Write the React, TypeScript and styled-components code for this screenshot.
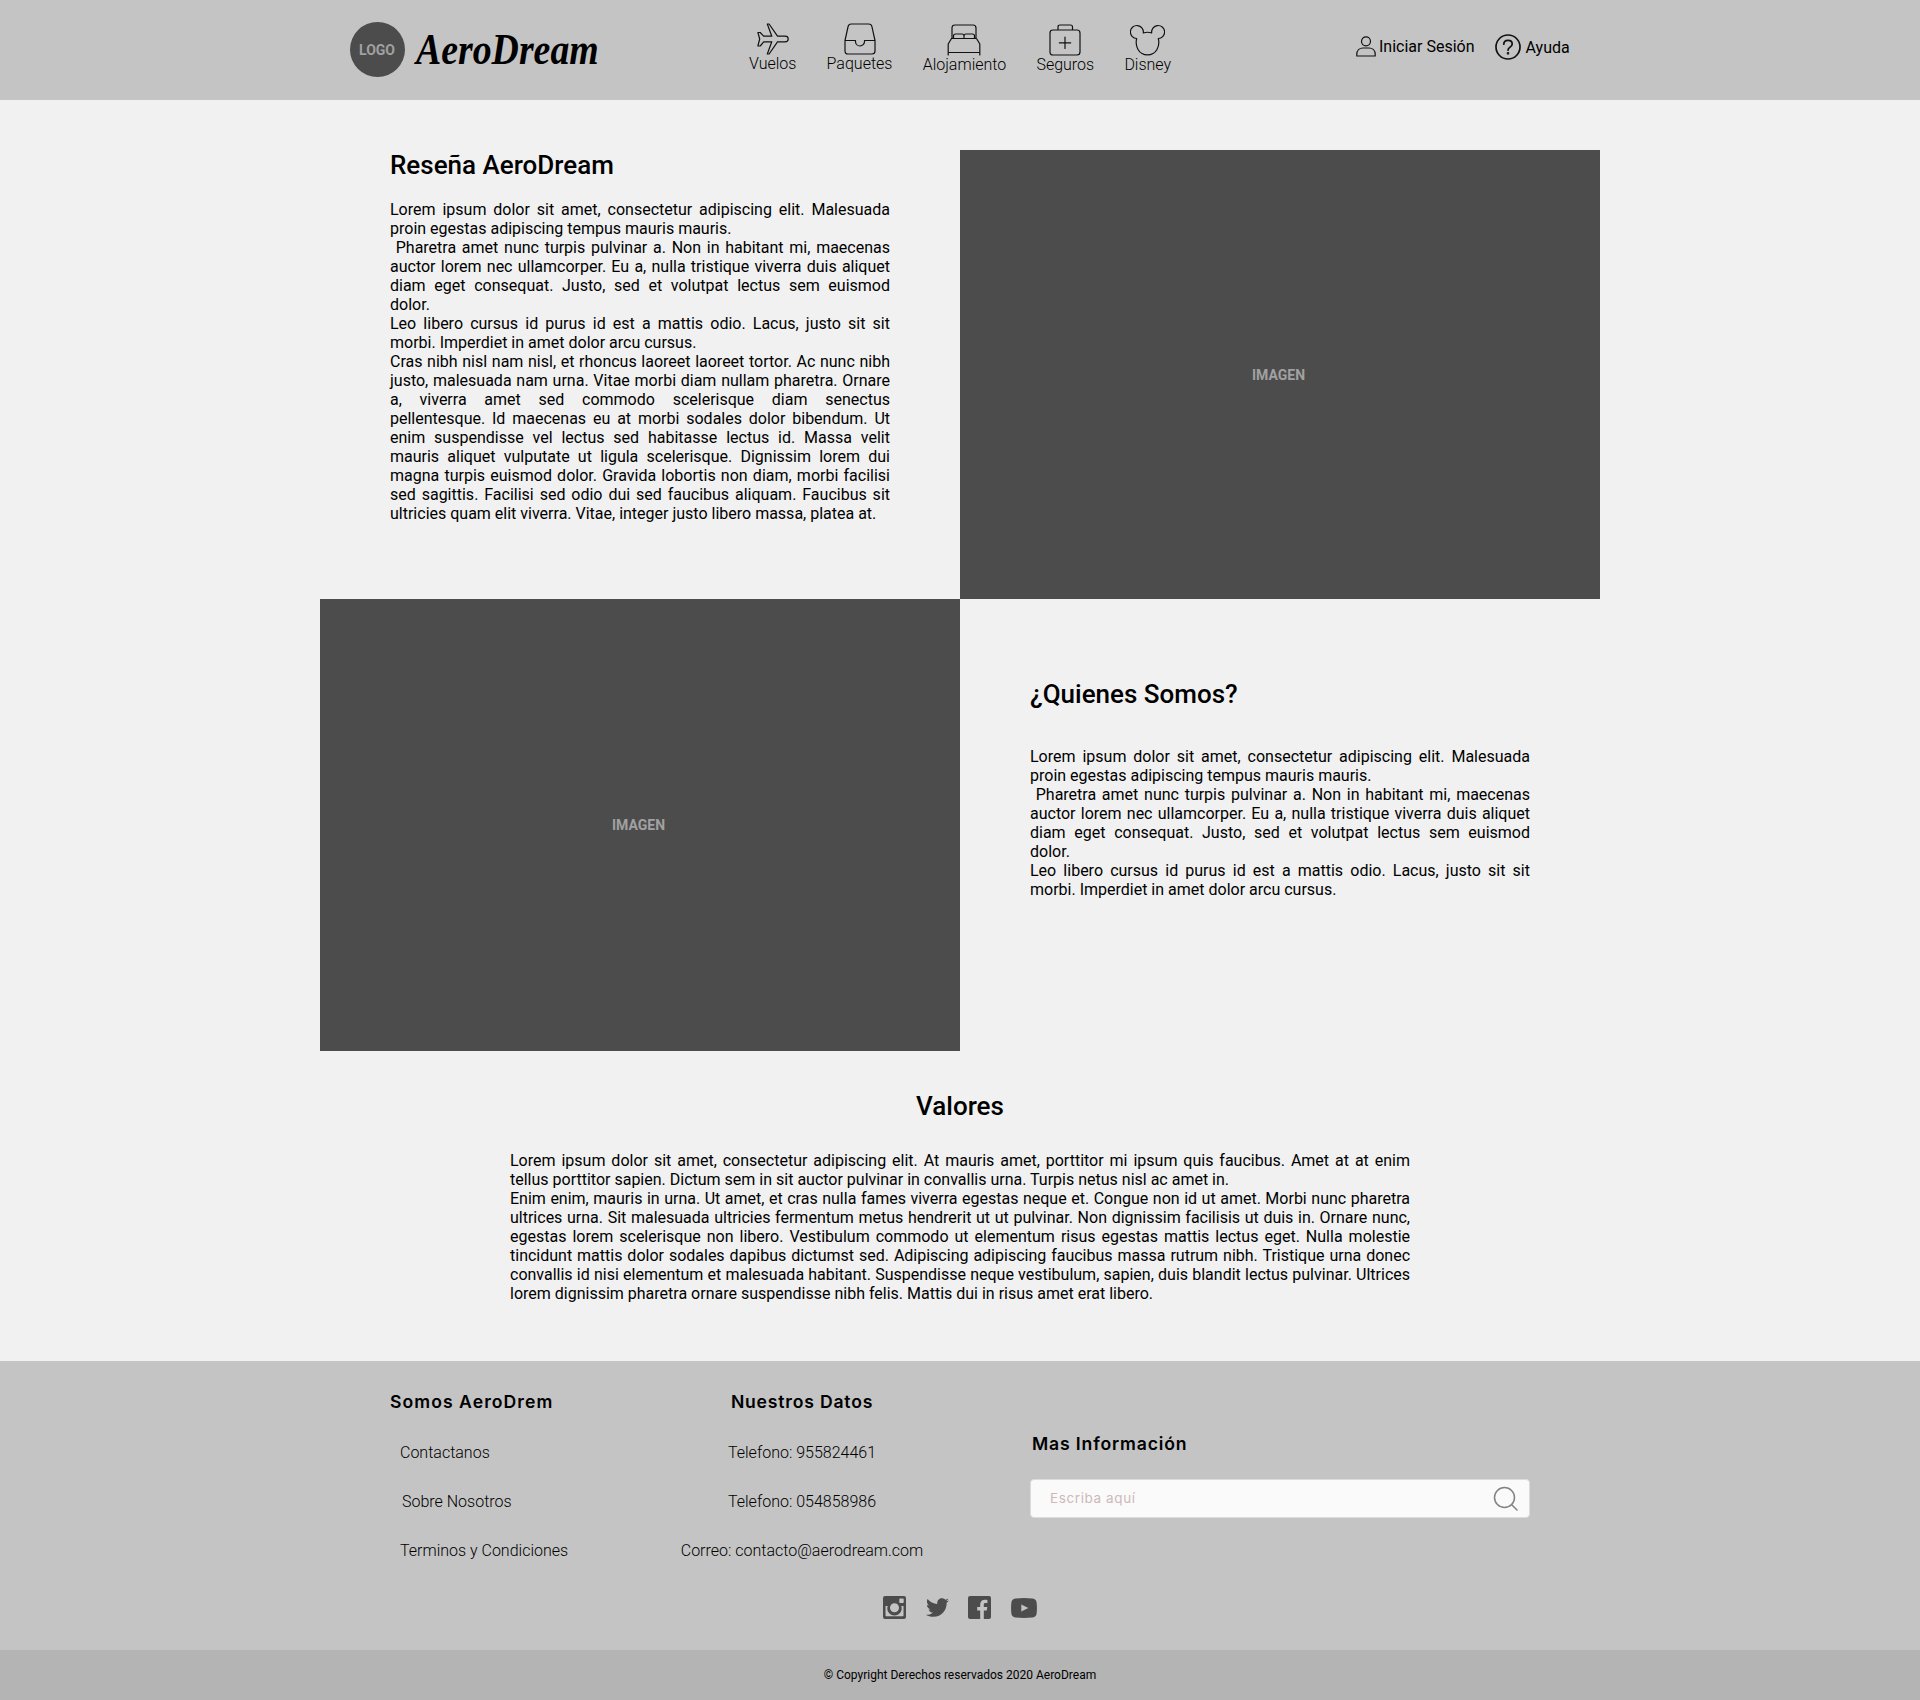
import React from 'react';
import styled, { createGlobalStyle } from 'styled-components';
import { FaTwitter } from 'react-icons/fa';

const GlobalStyle = createGlobalStyle`
  * { box-sizing: border-box; }
  body { margin: 0; background: #f1f1f1; color: #000; font-family: Roboto, "Liberation Sans", sans-serif; font-size: 16px; line-height: 19px; }
  h1, h2, h3, p, ul { margin: 0; padding: 0; }
  svg { display: block; }
  a { color: inherit; text-decoration: none; }
`;

const Page = styled.div`
  width: 1920px;
  height: 1700px;
  background: #f1f1f1;
`;

const Header = styled.header`
  height: 100px;
  padding: 22px 350px 0;
  background: #c4c4c4;
  display: flex;
  align-items: flex-start;
`;

const Brand = styled.a`
  flex: none;
  width: 399px;
  display: flex;
  align-items: flex-start;
`;

const LogoCircle = styled.span`
  width: 55px;
  height: 55px;
  padding-right: 1px;
  border-radius: 50%;
  background: #4c4c4c;
  color: #a1a1a1;
  font-size: 14px;
  font-weight: 700;
  line-height: 56px;
  text-align: center;
`;

const Wordmark = styled.span`
  margin: 1px 0 0 11px;
  font-family: "Liberation Serif", serif;
  font-size: 45px;
  line-height: 52px;
  font-style: italic;
  font-weight: 700;
  transform: scaleX(0.84);
  transform-origin: 0 0;
`;

const Nav = styled.nav`
  flex: none;
  width: 607px;
  display: flex;
  gap: 30.2px;
`;

const NavItem = styled.a<{ $drop?: number }>`
  padding-top: ${(p) => p.$drop ?? 0}px;
  display: flex;
  flex-direction: column;
  align-items: center;
  font-weight: 300;
  svg { margin-bottom: -1px; }
`;

const Account = styled.div`
  flex: none;
  display: flex;
`;

const AccountLink = styled.a<{ $top: number; $gap: number; $right?: number }>`
  height: 30px;
  margin: ${(p) => p.$top}px ${(p) => p.$right ?? 0}px 0 0;
  display: flex;
  align-items: center;
  gap: ${(p) => p.$gap}px;
  white-space: nowrap;
`;

const Grid = styled.main`
  width: 1280px;
  margin: 50px auto 0;
  display: grid;
  grid-template-columns: 640px 640px;
  grid-template-rows: 449px 452px;
`;

const Picture = styled.div<{ $drop?: number }>`
  padding: ${(p) => p.$drop ?? 0}px 3px 0 0;
  display: flex;
  align-items: center;
  justify-content: center;
  background: #4c4c4c;
  color: #a1a1a1;
  font-size: 14px;
  font-weight: 700;
`;

const Article = styled.section<{ $top: number; $gap: number }>`
  padding: ${(p) => p.$top}px 70px 0;
  h2 { margin-bottom: ${(p) => p.$gap}px; }
`;

const Title = styled.h2`
  font-size: 26px;
  line-height: 30px;
  font-weight: 500;
`;

const Copy = styled.p`
  text-align: justify;
  white-space: pre-wrap;
`;

const Values = styled.section`
  width: 900px;
  height: 310px;
  margin: 0 auto;
  padding-top: 40px;
  h2 { margin-bottom: 30px; text-align: center; }
`;

const Footer = styled.footer`
  height: 289px;
  padding: 29px 390px 0;
  background: #c4c4c4;
`;

const FooterColumns = styled.div`
  height: 206px;
  display: grid;
  grid-template-columns: 270px 284px 1fr;
`;

const FooterTitle = styled.h3<{ $track: number }>`
  font-family: Inter, "Open Sans", sans-serif;
  font-size: 17.6px;
  line-height: 24px;
  font-weight: 600;
  letter-spacing: ${(p) => p.$track}px;
`;

const LinkList = styled.ul<{ $center?: boolean }>`
  margin-top: 29px;
  padding-left: ${(p) => (p.$center ? 0 : 10)}px;
  display: flex;
  flex-direction: column;
  gap: 30px;
  list-style: none;
  font-weight: 300;
  white-space: nowrap;
`;

const LinkItem = styled.li<{ $indent?: number }>`
  padding-left: ${(p) => p.$indent ?? 0}px;
`;

const DataColumn = styled.div`
  text-align: center;
`;

const InfoColumn = styled.div`
  padding: 42px 0 0 86px;
  h3 { padding-left: 2px; }
`;

const SearchBox = styled.label`
  width: 500px;
  height: 39px;
  margin-top: 23px;
  padding: 0 10px 0 19px;
  display: flex;
  align-items: center;
  justify-content: space-between;
  border: 1px solid #dcdcdc;
  border-radius: 4px;
  background: #fafafa;
`;

const Placeholder = styled.span`
  color: #cdb9b9;
  font-family: Inter, "Open Sans", sans-serif;
  font-size: 13.5px;
  letter-spacing: 0.6px;
`;

const Socials = styled.div`
  display: flex;
  align-items: center;
  justify-content: center;
  gap: 19.7px;
  color: #4c4c4c;
`;

const Legal = styled.div`
  height: 50px;
  background: #b4b4b4;
  font-size: 12px;
  line-height: 50px;
  text-align: center;
`;

const line = { fill: 'none', stroke: '#111', strokeWidth: 1.2, strokeLinejoin: 'round', strokeLinecap: 'round' } as const;

const Plane = () => (
  <svg width="32" height="32" viewBox="0 0 32 32" {...line}>
    <path d="M10.3 1h1.8l8.4 12.2H28c1.8 0 3.2 1.2 3.2 2.8s-1.4 2.8-3.2 2.8h-7.500L12.100 31h-1.800L14.800 18.800H6.700L3.200 23H.9l1.800-7L.9 9.500h2.300l3.500 3.700h8.100Z" />
  </svg>
);
const Box = () => (
  <svg width="32" height="32" viewBox="0 0 32 32" {...line}>
    <path d="M7.300 1h17.400q2.700 0 3.200 2.500L31 17.500V28q0 3-3 3H4q-3 0-3-3V17.500l3.100-14Q4.600 1 7.300 1ZM1 17.500h10.500v1a4.500 4.500 0 0 0 9 0v-1H31" />
  </svg>
);
const Bed = () => (
  <svg width="34" height="32" viewBox="0 0 34 32" {...line}>
    <path d="M5 14.500V4q0-3 3-3h18q3 0 3 3v10.500M4.500 14.500h25L32.800 20v11M4.500 14.500 1.200 20v11M1.200 28.500h31.600M6.500 14V12q0-2 2-2H15q2 0 2 2v2M17 12q0-2 2-2h6.500q2 0 2 2v2" />
  </svg>
);
const Kit = () => (
  <svg width="32" height="32" viewBox="0 0 32 32" {...line}>
    <path d="M4 6h24q3 0 3 3v19q0 3-3 3H4q-3 0-3-3V9q0-3 3-3ZM9 6V3q0-2 2-2h10.500q2 0 2 2v3M16 13v11.500M10.300 18.800h11.400" />
  </svg>
);
const Mouse = () => (
  <svg width="35" height="32" viewBox="0 0 35 32" {...line}>
    <path d="M13.300 9A6.500 6.500 0 1 0 6.700 14.500C5.800 18 6 22 8 25.500A11 11 0 0 0 27 25.500C29 22 29.200 18 28.300 14.500A6.500 6.500 0 1 0 21.700 9Q17.500 7.500 13.300 9Z" />
  </svg>
);
const User = () => (
  <svg width="20" height="21" viewBox="0 0 20 21" {...line}>
    <circle cx="10" cy="5.300" r="4.500" />
    <path d="M.8 20v-1.500C.8 14.500 3.500 12 7 12h6c3.500 0 6.200 2.500 6.200 6.500V20Z" />
  </svg>
);
const Help = () => (
  <svg width="26" height="26" viewBox="0 0 26 26" {...line} strokeWidth="1.700">
    <circle cx="13" cy="13" r="12" />
    <path d="M8.800 10.200c0-2.300 1.700-3.900 4.200-3.900s4.200 1.500 4.200 3.600c0 3.200-4.200 3.200-4.200 6.300" />
    <circle cx="13" cy="19.300" r=".5" fill="#111" />
  </svg>
);
const Search = () => (
  <svg width="26" height="26" viewBox="0 0 26 26" fill="none" stroke="#828282" strokeWidth="1.500" strokeLinecap="round">
    <circle cx="11.500" cy="11.500" r="10" />
    <path d="m18.700 18.700 5.300 5.300" />
  </svg>
);
const Instagram = () => (
  <svg width="23" height="23" viewBox="0 0 23 23" fill="currentColor">
    <path fillRule="evenodd" d="M2 0h19q2 0 2 2v19q0 2-2 2H2q-2 0-2-2V2Q0 0 2 0ZM17 2.500q-.7 0-.7.700v3q0 .7.700.7h3q.7 0 .7-.7v-3q0-.7-.7-.7ZM2.500 10v9.500q0 .8.800.8h16.400q.8 0 .8-.8V10h-2.200a7.200 7.200 0 1 1-13.600 0ZM11.500 7.200a4.500 4.500 0 1 0 0 9 4.500 4.500 0 0 0 0-9Z" />
  </svg>
);
const Facebook = () => (
  <svg width="23" height="23" viewBox="0 0 23 23" fill="currentColor">
    <path d="M2 0h19q2 0 2 2v19q0 2-2 2h-5.200v-8.500h3l.5-3.500h-3.500V8.800c0-1 .4-1.700 1.800-1.700h1.800V4c-.4 0-1.300-.2-2.500-.2-2.900 0-4.700 1.700-4.700 4.700V11h-3v3.500h3V23H2q-2 0-2-2V2Q0 0 2 0Z" />
  </svg>
);
const Youtube = () => (
  <svg width="26" height="20" viewBox="0 0 26 20" fill="currentColor">
    <path fillRule="evenodd" d="M5 .5Q13-.3 21 .5q4.200.3 4.600 4 .7 5.500 0 11-.4 3.700-4.600 4-8 .8-16 0-4.200-.3-4.600-4-.7-5.500 0-11Q.8.800 5 .5ZM10.300 6.500v7l7-3.500Z" />
  </svg>
);

const intro = `Lorem ipsum dolor sit amet, consectetur adipiscing elit. Malesuada proin egestas adipiscing tempus mauris mauris.
 Pharetra amet nunc turpis pulvinar a. Non in habitant mi, maecenas auctor lorem nec ullamcorper. Eu a, nulla tristique viverra duis aliquet diam eget consequat. Justo, sed et volutpat lectus sem euismod dolor.
Leo libero cursus id purus id est a mattis odio. Lacus, justo sit sit morbi. Imperdiet in amet dolor arcu cursus.`;

const review = `${intro}
Cras nibh nisl nam nisl, et rhoncus laoreet laoreet tortor. Ac nunc nibh justo, malesuada nam urna. Vitae morbi diam nullam pharetra. Ornare a, viverra amet sed commodo scelerisque diam senectus pellentesque. Id maecenas eu at morbi sodales dolor bibendum. Ut enim suspendisse vel lectus sed habitasse lectus id. Massa velit mauris aliquet vulputate ut ligula scelerisque. Dignissim lorem dui magna turpis euismod dolor. Gravida lobortis non diam, morbi facilisi sed sagittis. Facilisi sed odio dui sed faucibus aliquam. Faucibus sit ultricies quam elit viverra. Vitae, integer justo libero massa, platea at.`;

const values = `Lorem ipsum dolor sit amet, consectetur adipiscing elit. At mauris amet, porttitor mi ipsum quis faucibus. Amet at at enim tellus porttitor sapien. Dictum sem in sit auctor pulvinar in convallis urna. Turpis netus nisl ac amet in.
Enim enim, mauris in urna. Ut amet, et cras nulla fames viverra egestas neque et. Congue non id ut amet. Morbi nunc pharetra ultrices urna. Sit malesuada ultricies fermentum metus hendrerit ut ut pulvinar. Non dignissim facilisis ut duis in. Ornare nunc, egestas lorem scelerisque non libero. Vestibulum commodo ut elementum risus egestas mattis lectus eget. Nulla molestie tincidunt mattis dolor sodales dapibus dictumst sed. Adipiscing adipiscing faucibus massa rutrum nibh. Tristique urna donec convallis id nisi elementum et malesuada habitant. Suspendisse neque vestibulum, sapien, duis blandit lectus pulvinar. Ultrices lorem dignissim pharetra ornare suspendisse nibh felis. Mattis dui in risus amet erat libero.`;

export default function App() {
  return (
    <Page>
      <GlobalStyle />
      <Header>
        <Brand href="#">
          <LogoCircle>LOGO</LogoCircle>
          <Wordmark>AeroDream</Wordmark>
        </Brand>
        <Nav>
          <NavItem href="#" $drop={1}><Plane />Vuelos</NavItem>
          <NavItem href="#" $drop={1}><Box />Paquetes</NavItem>
          <NavItem href="#" $drop={2}><Bed />Alojamiento</NavItem>
          <NavItem href="#" $drop={2}><Kit />Seguros</NavItem>
          <NavItem href="#" $drop={2}><Mouse />Disney</NavItem>
        </Nav>
        <Account>
          <AccountLink href="#" $top={9} $gap={3} $right={20}><User />Iniciar Sesión</AccountLink>
          <AccountLink href="#" $top={10} $gap={5}><Help />Ayuda</AccountLink>
        </Account>
      </Header>
      <Grid>
        <Article $top={0} $gap={20}>
          <Title>Reseña AeroDream</Title>
          <Copy>{review}</Copy>
        </Article>
        <Picture $drop={2}>IMAGEN</Picture>
        <Picture>IMAGEN</Picture>
        <Article $top={80} $gap={38}>
          <Title>¿Quienes Somos?</Title>
          <Copy>{intro}</Copy>
        </Article>
      </Grid>
      <Values>
        <Title>Valores</Title>
        <Copy>{values}</Copy>
      </Values>
      <Footer>
        <FooterColumns>
          <div>
            <FooterTitle $track={1.05}>Somos AeroDrem</FooterTitle>
            <LinkList>
              <LinkItem>Contactanos</LinkItem>
              <LinkItem $indent={2}>Sobre Nosotros</LinkItem>
              <LinkItem>Terminos y Condiciones</LinkItem>
            </LinkList>
          </div>
          <DataColumn>
            <FooterTitle $track={0.8}>Nuestros Datos</FooterTitle>
            <LinkList $center>
              <LinkItem>Telefono: 955824461</LinkItem>
              <LinkItem>Telefono: 054858986</LinkItem>
              <LinkItem>Correo: contacto@aerodream.com</LinkItem>
            </LinkList>
          </DataColumn>
          <InfoColumn>
            <FooterTitle $track={0.85}>Mas Información</FooterTitle>
            <SearchBox>
              <Placeholder>Escriba aquí</Placeholder>
              <Search />
            </SearchBox>
          </InfoColumn>
        </FooterColumns>
        <Socials>
          <Instagram />
          <FaTwitter size={23} />
          <Facebook />
          <Youtube />
        </Socials>
      </Footer>
      <Legal>© Copyright Derechos reservados 2020 AeroDream</Legal>
    </Page>
  );
}
